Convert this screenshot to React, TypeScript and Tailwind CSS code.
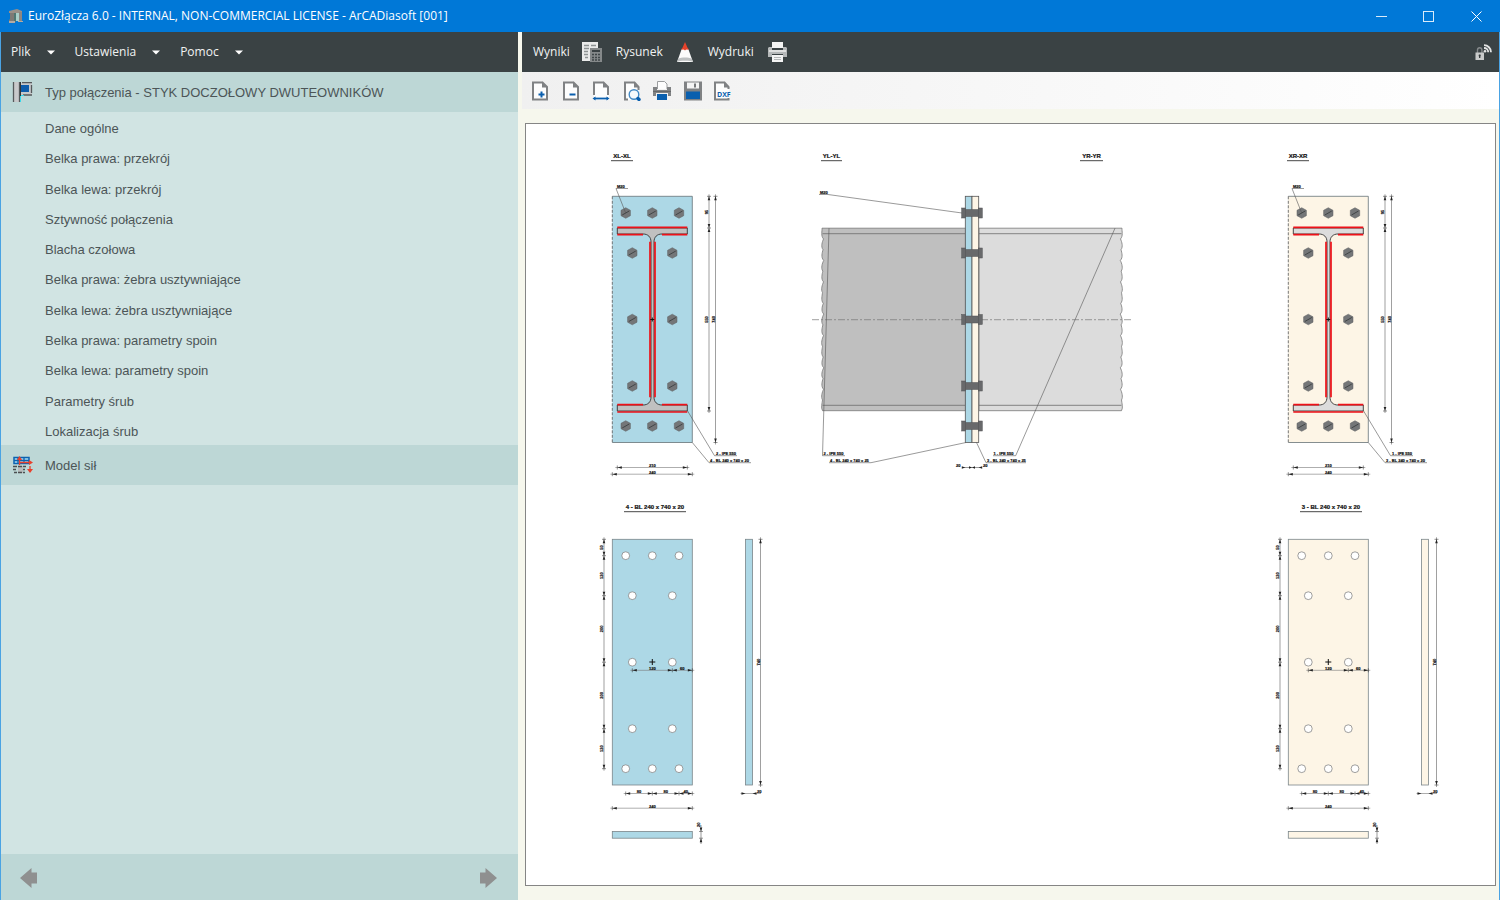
import type { ReactNode } from "react";

const MENUS = ["Plik", "Ustawienia", "Pomoc"];

const ITEMS = [
  "Dane ogólne",
  "Belka prawa: przekrój",
  "Belka lewa: przekrój",
  "Sztywność połączenia",
  "Blacha czołowa",
  "Belka prawa: żebra usztywniające",
  "Belka lewa: żebra usztywniające",
  "Belka prawa: parametry spoin",
  "Belka lewa: parametry spoin",
  "Parametry śrub",
  "Lokalizacja śrub",
];

/* ---------- icons ---------- */

function AppIcon() {
  return (
    <svg width="16" height="16" viewBox="0 0 16 16" aria-hidden="true">
      <path d="M1 3l8-2 5 2v2H1z" fill="#9a9088" />
      <path d="M2 5h4v9H1v-2l1-1z" fill="#7e7a76" />
      <path d="M6 5h5v8H6z" fill="#a9cfc9" />
      <path d="M11 4h3v10h-3z" fill="#8d8781" />
      <path d="M6 5h2v9H6z" fill="#4f7772" />
      <path d="M1 13h6v2H1zM10 13h5v1h-5z" fill="#b3aba2" />
    </svg>
  );
}

function ConnectionIcon() {
  return (
    <svg width="21" height="21" viewBox="0 0 21 21" aria-hidden="true">
      <rect x="2" y="0" width="5" height="20" fill="#c9c9cb" />
      <path d="M1.500 0v20M7.500 0v20" stroke="#55595b" strokeWidth="1.300" />
      <rect x="9" y="1" width="11" height="12" fill="#c5c8ca" />
      <path d="M10 0.700h10M11 13h9M19.500 3v8" stroke="#55595b" strokeWidth="1.300" />
      <path d="M8.500 0v14" stroke="#303436" />
      <path d="M8.500 14v6" stroke="#35d8ea" />
      <path d="M9 13.500h3" stroke="#35d8ea" />
      <rect x="9" y="3" width="8" height="7" fill="#0b5cab" />
    </svg>
  );
}

function ForceIcon() {
  return (
    <svg width="21" height="18" viewBox="0 0 21 18" aria-hidden="true">
      <rect x="2" y="1.500" width="15" height="6" fill="#a9dcf2" stroke="#0b62b0" strokeWidth="1.500" />
      <path d="M2 4.500h15M6 1.500v6M12 1.500v6" stroke="#0b62b0" strokeWidth="1.300" />
      <path d="M7.500 9V3M8 6.500h10M18 10v6" stroke="#e8402c" strokeWidth="1.300" />
      <path d="M7.500 0l2.500 4H5zM21 6.500l-4-2.500v5zM18 17l-3-4h6z" fill="#e8402c" />
      <rect x="6" y="10" width="5" height="7" fill="#b9bcbd" />
      <path d="M1 10.500h4M6 10.500h4M11 10.500h3M1 13.500h3M11 13.500h2M2 16.500h3M6 16.500h4M11 16.500h2" stroke="#4b4f51" strokeWidth="1.400" />
    </svg>
  );
}

function ResultsIcon() {
  return (
    <svg width="20" height="20" viewBox="0 0 20 20" aria-hidden="true">
      <path d="M0 0h16v19H0z" fill="#e9eaea" />
      <path d="M2 3.500h5M9 3.500h5M2 6.500h5M2 9.500h4M2 12.500h4M3 15.500h3" stroke="#8d9293" strokeWidth="1.300" />
      <path d="M8 6h12v14H8z" fill="#85898a" />
      <path d="M10 8h8v2h-8z" fill="#3a4143" />
      <path d="M10 12.500h8M10 15.500h8M10 18h8" stroke="#3f4648" strokeWidth="1.500" strokeDasharray="2 1" />
    </svg>
  );
}

function DrawingIcon() {
  return (
    <svg width="16" height="20" viewBox="0 0 16 20" aria-hidden="true">
      <path d="M8 0l3.500 8h-7z" fill="#e7432b" />
      <path d="M4.500 7.500h7L16 20H0z" fill="#fbfbfb" />
      <path d="M4.500 7.500L6.500 7l1.500 1.500L9.500 7l2 .5-.5-1.500H5z" fill="#e7432b" />
      <path d="M1.200 16.500c3-1.500 10.600-1.500 13.600 0L16 20c-2-1.800-14-1.800-16 0z" fill="#bdc0c1" />
    </svg>
  );
}

function PrinterLightIcon() {
  return (
    <svg width="20" height="20" viewBox="0 0 20 20" aria-hidden="true">
      <path d="M4 0h11v6H4z" fill="#f4f4f4" />
      <path d="M1 5h3v3h11V5h3l1 1v9h-4v-3H4v3H0V6z" fill="#b5b8b9" />
      <path d="M1 8h17v2H1z" fill="#dfe0e0" />
      <path d="M4 13h11v7H4z" fill="#f4f4f4" />
      <path d="M6 15.500h7M6 17.500h7" stroke="#b5b8b9" />
    </svg>
  );
}

function LockIcon() {
  return (
    <svg width="18" height="17" viewBox="0 0 18 17" aria-hidden="true">
      <path d="M3.500 9V6a2.200 2.200 0 0 1 4.400 0v3" fill="none" stroke="#85898b" strokeWidth="1.400" />
      <rect x="1.500" y="8.500" width="8.500" height="7.500" fill="#c9cbcb" />
      <path d="M5.700 10.500v3.500M4.700 11.500h2" stroke="#33393b" strokeWidth="1.300" />
      <path d="M10 1.200a7 7 0 0 1 7 7M10 4a4.200 4.200 0 0 1 4.200 4.200" fill="none" stroke="#e3e4e4" strokeWidth="1.800" />
      <circle cx="11" cy="7.300" r="1.300" fill="#e3e4e4" />
    </svg>
  );
}

function PageShape({ children, open = false }: { children: ReactNode; open?: boolean }) {
  return (
    <svg width="20" height="20" viewBox="0 0 20 20" aria-hidden="true">
      <path d="M3 1h10l5 5v13H3z" fill="#fdfdfd" />
      {open ? (
        <path d="M3 14V1.500h9.500L17 6v8" fill="none" stroke="#808284" strokeWidth="2" />
      ) : (
        <path d="M3 1.500h9.500L17 6v12.500H3z" fill="none" stroke="#808284" strokeWidth="2" />
      )}
      <path d="M12 0.500v6h6z" fill="#808284" />
      {children}
    </svg>
  );
}

const TOOLS: { label: string; icon: ReactNode }[] = [
  { label: "Powiększ", icon: <PageShape><path d="M8.500 13.500h6M11.500 10.500v6" stroke="#0a5fae" strokeWidth="2" /></PageShape> },
  { label: "Pomniejsz", icon: <PageShape><path d="M8.500 13.500h6" stroke="#0a5fae" strokeWidth="2" /></PageShape> },
  {
    label: "Dopasuj szerokość",
    icon: (
      <PageShape open>
        <path d="M3 17.500h14" stroke="#0a5fae" strokeWidth="1.800" />
        <path d="M4.500 15.500v4l-3-2zM15.500 15.500v4l3-2z" fill="#0a5fae" />
      </PageShape>
    ),
  },
  {
    label: "Podgląd",
    icon: (
      <svg width="20" height="20" viewBox="0 0 20 20" aria-hidden="true">
        <path d="M3 1h9l5 5v13H3z" fill="#fdfdfd" />
        <path d="M6 18.500H3V1.500h9.500L16.500 6v3" fill="none" stroke="#808284" strokeWidth="2" />
        <path d="M12 0.500v6h5.500z" fill="#808284" />
        <circle cx="12" cy="13.500" r="4.800" fill="#f7fafc" stroke="#4389c4" strokeWidth="1.400" />
        <path d="M16 17.500l1 1" stroke="#0a5fae" strokeWidth="3.400" strokeLinecap="round" />
      </svg>
    ),
  },
  {
    label: "Drukuj",
    icon: (
      <svg width="20" height="20" viewBox="0 0 20 20" aria-hidden="true">
        <path d="M5.500 8V0.500h7l2.500 2.500V8" fill="#fdfdfd" stroke="#9b9d9f" />
        <path d="M1 6h4v3h10V6h4v9H1z" fill="#808284" />
        <path d="M1 10.500h18" stroke="#66686a" />
        <path d="M4 12h12v7H4z" fill="#f0f0f0" />
        <path d="M5 13h10v6H5z" fill="#0a5fae" />
      </svg>
    ),
  },
  {
    label: "Zapisz",
    icon: (
      <svg width="20" height="20" viewBox="0 0 20 20" aria-hidden="true">
        <path d="M1 0.500h18v19H1z" fill="#808284" />
        <path d="M4 1.500h12v6H4z" fill="#f5f5f5" />
        <path d="M11 2.500h2v4h-2z" fill="#77797b" />
        <path d="M3 10.500h14V18H3z" fill="#0a5fae" />
      </svg>
    ),
  },
  {
    label: "Eksport DXF",
    icon: (
      <svg width="20" height="20" viewBox="0 0 20 20" aria-hidden="true">
        <path d="M2 1h9l5 5v12H2z" fill="#fdfdfd" />
        <path d="M15.500 17v1.500H2V1.500h9.500L15.500 6v2" fill="none" stroke="#808284" strokeWidth="2" />
        <path d="M11 0.500v6h5.500z" fill="#808284" />
        <text x="4" y="15.500" fontSize="7" fontWeight="700" fontFamily="Open Sans, sans-serif" fill="#0a5fae">DXF</text>
      </svg>
    ),
  },
];

/* ---------- technical drawing ---------- */

const INK = "#222";
const THIN = "#777";

function Label({ x, y, size = 4, anchor = "start", children }: { x: number; y: number; size?: number; anchor?: "start" | "middle"; children: ReactNode }) {
  return (
    <text x={x} y={y} fontSize={size} fontWeight="700" textAnchor={anchor} fill="#111" stroke="#111" strokeWidth="0.200">
      {children}
    </text>
  );
}

function Heading({ x, y, w, children }: { x: number; y: number; w: number; children: ReactNode }) {
  return (
    <g>
      <Label x={x + w / 2} y={y} size={6} anchor="middle">{children}</Label>
      <path d={`M${x} ${y + 2.700}h${w}`} stroke="#333" strokeWidth="0.900" />
    </g>
  );
}

function HDim({ y, stops, texts }: { y: number; stops: number[]; texts: string[] }) {
  const last = stops.length - 1;
  return (
    <g>
      <path d={`M${stops[0] - 2} ${y}H${stops[last] + 2}`} stroke={THIN} strokeWidth="0.600" />
      {stops.map((s, i) => (
        <g key={s}>
          <path d={`M${s} ${y - 2}v4`} stroke={INK} strokeWidth="0.500" />
          {i < last && <path d={`M${s} ${y}l4.500 -1.300v2.600z`} fill={INK} />}
          {i > 0 && <path d={`M${s} ${y}l-4.500 -1.300v2.600z`} fill={INK} />}
        </g>
      ))}
      {texts.map((t, i) => (
        <Label key={i} x={(stops[i] + stops[i + 1]) / 2} y={y - 0.700} anchor="middle">{t}</Label>
      ))}
    </g>
  );
}

function VDim({ x, stops, texts }: { x: number; stops: number[]; texts: string[] }) {
  const last = stops.length - 1;
  return (
    <g>
      <path d={`M${x} ${stops[0] - 2}V${stops[last] + 2}`} stroke={THIN} strokeWidth="0.700" />
      {stops.map((s, i) => (
        <g key={s}>
          <path d={`M${x - 2} ${s}h4`} stroke={INK} strokeWidth="0.500" />
          {i < last && <path d={`M${x} ${s}l-1.300 4h2.600z`} fill={INK} />}
          {i > 0 && <path d={`M${x} ${s}l-1.300 -4h2.600z`} fill={INK} />}
        </g>
      ))}
      {texts.map((t, i) => (
        <g key={i} transform={`translate(${x - 0.700} ${(stops[i] + stops[i + 1]) / 2}) rotate(-90)`}>
          <Label x={0} y={0} anchor="middle">{t}</Label>
        </g>
      ))}
    </g>
  );
}

const BOLTS: [number, number][] = [
  [625.7, 16.7], [652.3, 16.7], [679, 16.7],
  [632.3, 56.7], [672.3, 56.7],
  [632.3, 123.200], [672.3, 123.200],
  [632.3, 189.700], [672.3, 189.700],
  [625.7, 229.700], [652.3, 229.700], [679, 229.700],
];

function Cross({ y, size = 3 }: { y: number; size?: number }) {
  return <path d={`M${652.3 - size} ${y}h${size * 2}M652.3 ${y - size}v${size * 2}`} stroke="#111" strokeWidth="1" />;
}

interface SideProps {
  dx: number;
  plate: string;
  beam: string;
  title: string;
  beamMark: string;
  plateMark: string;
}

function EndPlateView({ dx, plate, beam, title, beamMark, plateMark }: SideProps) {
  return (
    <g transform={`translate(${dx} 0)`}>
      <Heading x={611} y={158} w={22}>{title}</Heading>
      <rect x="612.300" y="196.300" width="80" height="246.200" fill={plate} />
      <path d="M612.300 196.300h80v246.200h-80" fill="none" stroke="#667276" strokeWidth="0.800" />
      <path d="M612.300 196.300v246.200" stroke="#555" strokeWidth="0.800" strokeDasharray="3 1.500" />
      {BOLTS.map(([x, y]) => (
        <g key={`${x}-${y}`} transform={`translate(${x} ${y + 196.300})`}>
          <path d="M0 -5.300L4.700 -2.700V2.700L0 5.300L-4.700 2.700V-2.700z" fill="#747678" stroke="#5c5e60" strokeWidth="0.500" />
          <path d="M-3.500 2L3.500 -2" stroke="#35383a" strokeWidth="0.800" />
        </g>
      ))}
      <path
        d="M617.300 228h70v6H662c-5 0-8 3-8 8V397c0 5 3 8 8 8h25.300v6h-70v-6H643c5 0 8-3 8-8V242c0-5-3-8-8-8H617.300z"
        fill={beam}
        stroke="#333"
        strokeWidth="0.900"
      />
      <path
        d="M617.300 227.300h70M617.300 234.700h25.700M662 234.700h25.300M650 241.700V397.300M655 241.700V397.300M617.300 404.700h25.700M662 404.700h25.300M617.300 412h70"
        stroke="#ee1118"
        strokeWidth="1.700"
      />
      <Cross y={319.5} size={2} />
      <Label x={617} y={187.5}>M20</Label>
      <path d="M628 188.500H616L625.700 213" fill="none" stroke="#555" strokeWidth="0.600" />
      <VDim x={709} stops={[196.3, 228, 411]} texts={["95", "550"]} />
      <VDim x={715.5} stops={[196.3, 442.5]} texts={["740"]} />
      <HDim y={467.5} stops={[617.3, 687.3]} texts={["210"]} />
      <HDim y={474.2} stops={[612.3, 692.3]} texts={["240"]} />
      <path d="M687.300 410.500L714.500 455.700H737M692.300 442.500L709 462.700H751" fill="none" stroke="#555" strokeWidth="0.600" />
      <Label x={716} y={455}>{beamMark} - IPE 550</Label>
      <Label x={710} y={462}>{plateMark} - BL 240 x 740 x 20</Label>
    </g>
  );
}

function PlateDetail({ dx, plate, plateMark }: SideProps) {
  return (
    <g transform={`translate(${dx} 0)`}>
      <Heading x={624} y={509} w={62}>{plateMark} - BL 240 x 740 x 20</Heading>
      <g fill={plate} stroke="#7a8589" strokeWidth="0.800">
        <rect x="612.300" y="539.300" width="80" height="245.700" />
        <rect x="745.500" y="539.300" width="7" height="245.700" />
        <rect x="612.300" y="831.500" width="80" height="6.700" />
      </g>
      {BOLTS.map(([x, y]) => (
        <circle key={`${x}-${y}`} cx={x} cy={y + 539} r="3.900" fill="#fff" stroke="#777" strokeWidth="0.700" />
      ))}
      <Cross y={662} />
      <VDim x={604} stops={[539.3, 555.7, 595.7, 662.2, 728.7, 768.7]} texts={["50", "120", "200", "200", "120"]} />
      <HDim y={670.3} stops={[632.3, 672.3, 692.3]} texts={["120", "60"]} />
      <HDim y={793.5} stops={[625.7, 652.3, 679, 692.3]} texts={["80", "80", "40"]} />
      <HDim y={808.2} stops={[612.3, 692.3]} texts={["240"]} />
      <VDim x={760.5} stops={[539.3, 785]} texts={["740"]} />
      <path d="M740.500 793.500H761" stroke={THIN} strokeWidth="0.600" />
      <path d="M745.500 793.500l-4 -1.300v2.600zM752.500 793.500l4 -1.300v2.600z" fill={INK} />
      <Label x={757} y={793}>20</Label>
      <path d="M701 825v19M699 831.500h4M699 838.200h4" stroke="#555" strokeWidth="0.600" />
      <path d="M701 831.500l-1.300 -4h2.600zM701 838.200l-1.300 4h2.600z" fill={INK} />
      <g transform="translate(700 827) rotate(-90)"><Label x={0} y={0}>20</Label></g>
    </g>
  );
}

/* Break line of a cut beam: scallops bulging outwards, side is -1 (left) or 1 (right). */
const DRIFT = [0, 1, 0.5, 1.200, 0.300, 1, 0, 0.800, 1.300, 0.400, 1, 0, 0.700, 1.200, 0.500, 1, 0];

function breakLine(x: number, side: number) {
  const step = 182.5 / DRIFT.length;
  return DRIFT.map((_, i) => {
    const next = x - side * (DRIFT[i + 1] ?? 0);
    const y = 228.2 + step * i;
    return `C${x + side * 0.300} ${y + 3} ${x + side * 1.800} ${y + step - 3} ${next} ${y + step}`;
  }).join("");
}

function SideView() {
  return (
    <g>
      <Heading x={821} y={158} w={21}>YL-YL</Heading>
      <Heading x={1080} y={158} w={23}>YR-YR</Heading>
      <g stroke="#777" strokeWidth="0.800">
        <path d={`M965.500 228.200H822${breakLine(822.5, -1)}H965.500z`} fill="#bfbfbf" />
        <path d={`M979 228.200H1122${breakLine(1121.5, 1)}H979z`} fill="#dcdcdc" />
      </g>
      <path d="M822.500 233.700H965M822.500 405.300H965M979 233.700h142.500M979 405.300h142.500" stroke="#6b6b6b" strokeWidth="0.800" />
      <path d="M812 319.700H1132" stroke="#777" strokeWidth="0.700" strokeDasharray="7 2 2 2" />
      <rect x="965.300" y="196.300" width="6.700" height="246.200" fill="#add8e6" stroke="#555" strokeWidth="0.800" />
      <rect x="972" y="196.300" width="6.700" height="246.200" fill="#fdf5e6" stroke="#555" strokeWidth="0.800" />
      {[213, 253, 319.5, 386, 426].map((y) => (
        <g key={y} fill="#68696b" stroke="#505254" strokeWidth="0.500">
          <rect x="965" y={y - 3.5} width="14" height="7" />
          <rect x="961.700" y={y - 5} width="4" height="10" />
          <rect x="978.300" y={y - 5} width="4" height="10" />
        </g>
      ))}
      <g fill="none" stroke="#555" strokeWidth="0.600">
        <path d="M819 194.500h9L962 213" />
        <path d="M829 228.200L822.500 455.700H845" />
        <path d="M966 442.500L871 462.700H829" />
        <path d="M1115 228.200L1015.700 455.700H993" />
        <path d="M976.500 442.500L986 462.700H1026" />
        <path d="M962 467.500h20" />
      </g>
      <path d="M965.300 467.500l-3.500 -1.200v2.400zM978.700 467.500l3.500 -1.200v2.400zM972 467.500l-3 -1.200v2.400zM972 467.500l3 -1.200v2.400z" fill={INK} />
      <Label x={820} y={194}>M20</Label>
      <Label x={823.5} y={455}>2 - IPE 550</Label>
      <Label x={830} y={462}>4 - BL 240 x 740 x 25</Label>
      <Label x={993.5} y={455}>1 - IPE 550</Label>
      <Label x={987} y={462}>3 - BL 240 x 740 x 25</Label>
      <Label x={956} y={467}>20</Label>
      <Label x={983} y={467}>20</Label>
    </g>
  );
}

const LEFT: SideProps = { dx: 0, plate: "#add8e6", beam: "#c0c0c0", title: "XL-XL", beamMark: "2", plateMark: "4" };
const RIGHT: SideProps = { dx: 676, plate: "#fdf5e6", beam: "#dcdcdc", title: "XR-XR", beamMark: "1", plateMark: "3" };

function Drawing() {
  return (
    <svg viewBox="526 124 969 761" className="h-full w-full" fontFamily="Liberation Sans, Arial, sans-serif" role="img" aria-label="Rysunek połączenia">
      <EndPlateView {...LEFT} />
      <SideView />
      <EndPlateView {...RIGHT} />
      <PlateDetail {...LEFT} />
      <PlateDetail {...RIGHT} />
    </svg>
  );
}

/* ---------- shell ---------- */

function TitleBar() {
  return (
    <header className="flex h-8 shrink-0 items-center bg-[#0078d7] pl-2 text-white">
      <AppIcon />
      <h1 className="ml-1 flex-1 text-[12px] leading-4">EuroZłącza 6.0 - INTERNAL, NON-COMMERCIAL LICENSE - ArCADiasoft [001]</h1>
      <button type="button" aria-label="Minimalizuj" className="flex h-8 w-[47px] items-center justify-center">
        <svg width="11" height="11" viewBox="0 0 11 11"><path d="M0 5.500h11" stroke="#d9ebfa" /></svg>
      </button>
      <button type="button" aria-label="Maksymalizuj" className="flex h-8 w-[47px] items-center justify-center">
        <svg width="11" height="11" viewBox="0 0 11 11"><rect x="0.500" y="0.500" width="10" height="10" fill="none" stroke="#d9ebfa" /></svg>
      </button>
      <button type="button" aria-label="Zamknij" className="flex h-8 w-12 items-center justify-center">
        <svg width="11" height="11" viewBox="0 0 11 11"><path d="M0.500 0.500l10 10M10.500 0.500l-10 10" stroke="#fff" /></svg>
      </button>
    </header>
  );
}

function Sidebar() {
  return (
    <aside className="flex flex-col border-l border-[#4aa3e3] bg-[#d1e4e3]">
      <nav className="flex h-10 items-center gap-5 bg-[#3a4244] pl-[10px] text-[12px] leading-4 text-[#f1f2f2]">
        {MENUS.map((label) => (
          <button key={label} type="button" className="flex items-center gap-4">
            {label}
            <svg width="8" height="5" viewBox="0 0 8 5" aria-hidden="true"><path d="M0 0.500h8L4 4.500z" fill="#fff" /></svg>
          </button>
        ))}
      </nav>
      <div className="flex flex-1 flex-col font-['Liberation_Sans',Arial,sans-serif] text-[13px] leading-5 text-[#4c5557]">
        <button type="button" className="flex h-10 items-center gap-3 bg-[#bdd7d6] pl-[11px] text-left">
          <ConnectionIcon />
          <span className="pt-0.5">Typ połączenia - STYK DOCZOŁOWY DWUTEOWNIKÓW</span>
        </button>
        <ul className="grid h-[333px] grid-rows-11">
          {ITEMS.map((item) => (
            <li key={item} className="flex items-center">
              <button type="button" className="w-full pt-1 pl-11 text-left">{item}</button>
            </li>
          ))}
        </ul>
        <button type="button" className="flex h-10 items-center gap-3 bg-[#bdd7d6] pl-[11px] text-left">
          <ForceIcon />
          <span className="pt-0.5">Model sił</span>
        </button>
      </div>
      <div className="flex h-[46px] items-center justify-between bg-[#bdd7d6] pt-0.5 pr-5 pl-[18px]">
        <button type="button" aria-label="Poprzedni">
          <svg width="19" height="20" viewBox="0 0 19 20"><path d="M1 10L12.500 0v4.500H18v11h-5.500V20z" fill="#8f9090" /></svg>
        </button>
        <button type="button" aria-label="Następny">
          <svg width="19" height="20" viewBox="0 0 19 20"><path d="M18 10L6.500 0v4.500H1v11h5.500V20z" fill="#8f9090" /></svg>
        </button>
      </div>
    </aside>
  );
}

function Workspace() {
  return (
    <main className="flex flex-col border-r border-[#4aa3e3]">
      <div className="flex h-10 items-center bg-[#3a4244] pr-[7px] pl-[11px] text-[12px] leading-4 text-[#f1f2f2]">
        <button type="button" className="mr-[14px] flex items-center gap-3">Wyniki<ResultsIcon /></button>
        <button type="button" className="mr-[15px] flex items-center gap-[14px]">Rysunek<DrawingIcon /></button>
        <button type="button" className="flex items-center gap-[14px]">Wydruki<PrinterLightIcon /></button>
        <button type="button" aria-label="Licencja" className="ml-auto"><LockIcon /></button>
      </div>
      <div className="flex h-[37px] items-center bg-linear-to-r from-[#f0f0f0] to-white pl-2">
        <div className="flex w-[203px] justify-between">
          {TOOLS.map((t) => (
            <button key={t.label} type="button" aria-label={t.label} title={t.label} className="size-5">{t.icon}</button>
          ))}
        </div>
      </div>
      <section className="mt-[14px] mr-[3px] mb-[14px] ml-[3px] min-h-0 flex-1 border border-[#858585] bg-white">
        <Drawing />
      </section>
    </main>
  );
}

export default function App() {
  return (
    <div className="flex h-screen flex-col bg-[#f6f7ed] font-['Open_Sans','Segoe_UI',sans-serif]">
      <TitleBar />
      <div className="grid min-h-0 flex-1 grid-cols-[518fr_978fr] grid-rows-1 gap-1">
        <Sidebar />
        <Workspace />
      </div>
    </div>
  );
}
